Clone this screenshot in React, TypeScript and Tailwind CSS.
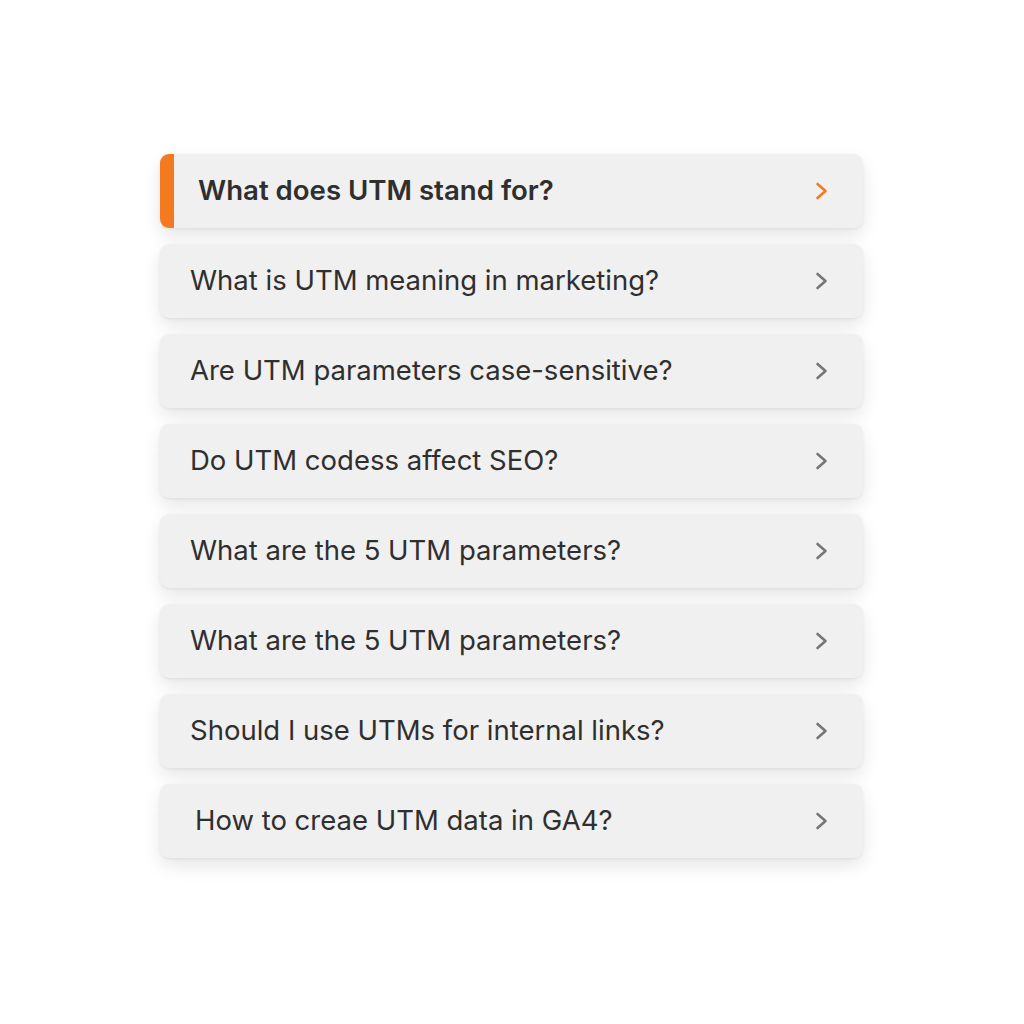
import React from 'react';

const items = [
  { label: 'What does UTM stand for?', active: true },
  { label: 'What is UTM meaning in marketing?' },
  { label: 'Are UTM parameters case-sensitive?' },
  { label: 'Do UTM codess affect SEO?' },
  { label: 'What are the 5 UTM parameters?' },
  { label: 'What are the 5 UTM parameters?' },
  { label: 'Should I use UTMs for internal links?' },
  { label: 'How to creae UTM data in GA4?', indent: true },
];

const Chevron: React.FC<{ active?: boolean }> = ({ active }) => (
  <svg width="16" height="20" viewBox="0 0 16 20" fill="none" className={active ? 'text-[#f47a20]' : 'text-[#777777]'}>
    <path d="M3.5 3l8 7-8 7" stroke="currentColor" strokeWidth="2.6" strokeLinecap="round" strokeLinejoin="round" />
  </svg>
);

export default function App() {
  return (
    <div className="w-[1024px] h-[1024px] bg-white pt-[154px] pl-[160px]" style={{ fontFamily: 'Inter, "Noto Sans", sans-serif' }}>
      <div className="w-[703px] flex flex-col gap-[16px]">
        {items.map((item, i) => (
          <div
            key={i}
            className="h-[74px] rounded-[9px] bg-[#f0f0f0] flex items-center overflow-hidden shadow-[0_8px_18px_rgba(0,0,0,0.10),0_1px_3px_rgba(0,0,0,0.06)]"
          >
            {item.active ? <div className="w-[14px] h-full bg-[#f47a20]" /> : null}
            <div
              className={`flex-1 text-[#2f2f2f] ${
                item.active ? 'pl-[24px] font-semibold text-[27.6px]' : item.indent ? 'pl-[35px] text-[27.5px]' : 'pl-[30px] text-[27.5px]'
              }`}
            >
              {item.label}
            </div>
            <div className="pr-[33px]">
              <Chevron active={item.active} />
            </div>
          </div>
        ))}
      </div>
    </div>
  );
}
